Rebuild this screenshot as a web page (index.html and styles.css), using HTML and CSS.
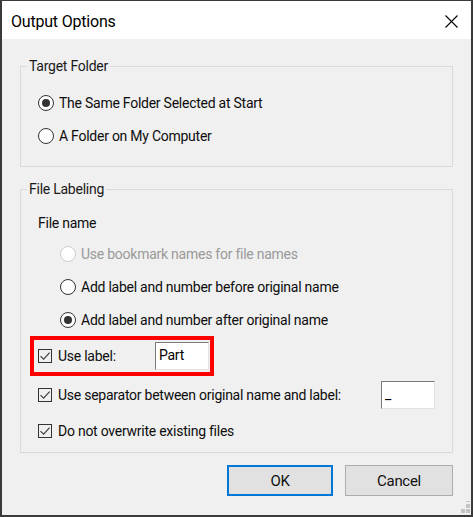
FILE: index.html
```html
<!DOCTYPE html>
<html lang="en">
<head>
  <meta charset="UTF-8" />
  <meta name="viewport" content="width=device-width, initial-scale=1.0"/>
  <title>Output Options</title>
  <link rel="stylesheet" href="styles.css">
</head>
<body>
  <div class="window">
    <div class="titlebar">
      <span class="title">Output Options</span>
      <svg class="close" width="13" height="13" viewBox="0 0 13 13">
        <path d="M0.5 0.5L12.5 12.5M12.5 0.5L0.5 12.5" stroke="#000" stroke-width="1.1" fill="none"/>
      </svg>
    </div>

    <div class="content">
      <fieldset class="group group-target">
        <legend>Target Folder</legend>
        <div class="option"><span class="radio checked"></span>The Same Folder Selected at Start</div>
        <div class="option gap-9"><span class="radio"></span>A Folder on My Computer</div>
      </fieldset>

      <fieldset class="group group-labeling">
        <legend>File Labeling</legend>
        <div class="option caption">File name</div>
        <div class="option sub disabled gap-7"><span class="radio"></span>Use bookmark names for file names</div>
        <div class="option sub gap-9"><span class="radio"></span>Add label and number before original name</div>
        <div class="option sub gap-9"><span class="radio checked"></span>Add label and number after original name</div>

        <div class="highlight">
          <div class="option"><span class="check"><svg width="14" height="14" viewBox="0 0 14 14"><path d="M2.5 7.2L5.6 10.2L11.6 3.6" stroke="#3a3a3a" stroke-width="1.1" fill="none"/></svg></span>Use label:</div>
          <span class="field">Part</span>
        </div>

        <div class="option-row">
          <div class="option"><span class="check"><svg width="14" height="14" viewBox="0 0 14 14"><path d="M2.5 7.2L5.6 10.2L11.6 3.6" stroke="#3a3a3a" stroke-width="1.1" fill="none"/></svg></span>Use separator between original name and label:</div>
          <span class="field">_</span>
        </div>

        <div class="option gap-9"><span class="check"><svg width="14" height="14" viewBox="0 0 14 14"><path d="M2.5 7.2L5.6 10.2L11.6 3.6" stroke="#3a3a3a" stroke-width="1.1" fill="none"/></svg></span>Do not overwrite existing files</div>
      </fieldset>

      <div class="buttons">
        <button class="btn btn-default">OK</button>
        <button class="btn btn-cancel">Cancel</button>
      </div>
    </div>

    <svg class="grip" width="9" height="12" viewBox="0 0 9 12">
      <rect x="5" y="0" width="4" height="1" fill="#c4c4c4"/>
      <rect x="5" y="3" width="4" height="4" fill="#c4c4c4"/>
      <rect x="0" y="8" width="4" height="4" fill="#c4c4c4"/>
      <rect x="5" y="8" width="4" height="4" fill="#c4c4c4"/>
    </svg>
  </div>
</body>
</html>
```

FILE: styles.css
```css
* {
  box-sizing: border-box;
}

body {
  margin: 0;
  font-family: Roboto, "Noto Sans", sans-serif;
  font-size: 14px;
  letter-spacing: -0.25px;
  color: #0d0d0d;
}

.window {
  position: relative;
  width: 473px;
  height: 517px;
  border: 2px solid #3a3a3a;
  border-top-width: 1px;
  background-color: #f0f0f0;
  display: flex;
  flex-direction: column;
}

.titlebar {
  height: 38px;
  flex-shrink: 0;
  background-color: #ffffff;
  display: flex;
  align-items: center;
  justify-content: space-between;
  padding: 0 13px 0 9px;
}

.title {
  font-size: 16px;
  letter-spacing: -0.2px;
  color: #000;
  margin-top: 2px;
}

.close {
  display: block;
  margin-top: 2px;
}

.content {
  padding: 17px 18px 0 18px;
}

.group {
  margin: 0;
  border: 1px solid #dadada;
  padding: 15px 17px 18px 17px;
  min-width: 0;
}

.group legend {
  margin-left: -11px;
  padding: 0 2px;
  line-height: 20px;
  color: #1a1a1a;
}

.group-labeling {
  margin-top: 12px;
  padding-top: 12px;
  padding-bottom: 9px;
}

.option {
  display: flex;
  align-items: center;
  height: 24px;
  gap: 5px;
  white-space: nowrap;
}

.gap-7 {
  margin-top: 7px;
}

.gap-9 {
  margin-top: 9px;
}

.sub {
  margin-left: 22px;
}

.disabled {
  color: #9a9a9a;
}

.radio {
  width: 16px;
  height: 16px;
  border: 1.5px solid #333;
  border-radius: 50%;
  background-color: #fff;
  display: flex;
  align-items: center;
  justify-content: center;
  flex-shrink: 0;
}

.radio.checked::after {
  content: "";
  width: 8px;
  height: 8px;
  border-radius: 50%;
  background-color: #333;
}

.disabled .radio {
  border-color: #cccccc;
  border-width: 1px;
}

.check {
  width: 14px;
  height: 14px;
  border: 1px solid #333;
  position: relative;
  flex-shrink: 0;
  margin-right: 1px;
}

.check svg {
  position: absolute;
  left: -1px;
  top: -1px;
}

.highlight {
  margin-top: 4px;
  margin-left: -8px;
  width: 184px;
  height: 40px;
  border: 4px solid #ff0000;
  padding: 0 1px 0 4px;
  display: flex;
  align-items: center;
  justify-content: space-between;
}

.option-row {
  margin-top: 4px;
  height: 30px;
  display: flex;
  align-items: center;
  justify-content: space-between;
}

.field {
  width: 54px;
  height: 28px;
  background-color: #fff;
  border: 1px solid #e3e3e3;
  border-top-color: #7a7a7a;
  border-left-color: #7a7a7a;
  padding: 2px 3px;
  line-height: 20px;
  color: #000;
}

.buttons {
  margin-top: 12px;
  display: flex;
  justify-content: flex-end;
  gap: 12px;
}

.btn {
  height: 31px;
  font-family: inherit;
  font-size: 15px;
  letter-spacing: -0.3px;
  color: #111;
  background-color: #e1e1e1;
  border: 1px solid #adadad;
  padding: 0;
  margin: 0;
}

.btn-default {
  width: 106px;
  border: 2px solid #0078d7;
}

.btn-cancel {
  width: 108px;
}

.grip {
  position: absolute;
  right: 1px;
  bottom: 2px;
}
```
